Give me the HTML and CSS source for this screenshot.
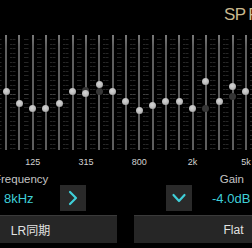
FILE: index.html
```html
<!DOCTYPE html>
<html>
<head>
<meta charset="utf-8">
<link rel="stylesheet" href="styles.css">
</head>
<body>
<div class="screen">
  <header class="top">
    <span class="title">SP F</span>
  </header>
  <div class="eq">
    <div class="band"><span class="knob" style="top:52.8px"></span></div>
    <div class="band"><span class="knob" style="top:64.8px"></span></div>
    <div class="band"><span class="knob" style="top:69.8px"></span></div>
    <div class="band"><span class="knob" style="top:69.8px"></span></div>
    <div class="band"><span class="knob" style="top:64.8px"></span></div>
    <div class="band"><span class="knob" style="top:52.8px"></span></div>
    <div class="band"><span class="knob ghost" style="top:51.5px"></span><span class="knob" style="top:55.2px"></span></div>
    <div class="band"><span class="knob ghost" style="top:52.8px"></span><span class="knob" style="top:45.5px"></span></div>
    <div class="band"><span class="knob" style="top:52.8px"></span></div>
    <div class="band"><span class="knob" style="top:62.5px"></span></div>
    <div class="band"><span class="knob" style="top:72.2px"></span></div>
    <div class="band"><span class="knob" style="top:67.2px"></span></div>
    <div class="band"><span class="knob" style="top:62.5px"></span></div>
    <div class="band"><span class="knob" style="top:62.5px"></span></div>
    <div class="band"><span class="knob" style="top:69.8px"></span></div>
    <div class="band"><span class="knob ghost" style="top:69.8px"></span><span class="knob" style="top:42.8px"></span></div>
    <div class="band"><span class="knob" style="top:62.5px"></span></div>
    <div class="band"><span class="knob ghost" style="top:57.5px"></span><span class="knob" style="top:47.8px"></span></div>
    <div class="band"><span class="knob" style="top:52.5px"></span></div>
  </div>
  <div class="freqs">
    <span class="f f1">125</span>
    <span class="f f2">315</span>
    <span class="f f3">800</span>
    <span class="f f4">2k</span>
    <span class="f f5">5k</span>
  </div>
  <div class="captions">
    <span class="cap-left">Frequency</span>
    <span class="cap-right">Gain</span>
  </div>
  <div class="values">
    <span class="val freq-val">8kHz</span>
    <button class="step next">
      <svg width="26" height="26" viewBox="0 0 26 26"><path d="M10 7 L16 13 L10 19" fill="none" stroke="#3fcfd8" stroke-width="2.2" stroke-linecap="round" stroke-linejoin="round"/></svg>
    </button>
    <button class="step down">
      <svg width="26" height="26" viewBox="0 0 26 26"><path d="M7.5 10 L13 16 L18.5 10" fill="none" stroke="#3fcfd8" stroke-width="2.2" stroke-linecap="round" stroke-linejoin="round"/></svg>
    </button>
    <span class="val gain-val">-4.0dB</span>
  </div>
  <div class="actions">
    <button class="act lr">LR同期</button>
    <button class="act flat">Flat</button>
  </div>
</div>
</body>
</html>
```
FILE: styles.css
```css
html, body {
  margin: 0;
  padding: 0;
  background: #000;
}
body {
  width: 252px;
  height: 248px;
  overflow: hidden;
  font-family: "Liberation Sans", "Noto Sans CJK JP", sans-serif;
}
.screen {
  width: 252px;
  height: 248px;
  overflow: hidden;
  display: flex;
  flex-direction: column;
}
.top {
  height: 35px;
  flex: none;
  box-sizing: border-box;
  padding: 6px 0 0 224px;
  white-space: nowrap;
  overflow: hidden;
}
.title {
  color: #c9b88e;
  font-size: 17px;
  line-height: 17px;
  letter-spacing: -0.6px;
  word-spacing: -1px;
  display: block;
}
.eq {
  display: grid;
  grid-template-columns: repeat(19, 13.333px);
  margin-left: -0.667px;
  height: 115px;
  flex: none;
}
.band {
  position: relative;
  height: 115px;
  background:
    linear-gradient(#404040, #404040) left 0 top 59px / 2.5px 1px no-repeat,
    linear-gradient(#404040, #404040) right 0 top 59px / 2.5px 1px no-repeat,
    repeating-linear-gradient(to bottom, #262626 0, #262626 1px, transparent 1px, transparent 4.55px) left 0 top 4.4px / 2.5px 110px no-repeat,
    repeating-linear-gradient(to bottom, #262626 0, #262626 1px, transparent 1px, transparent 4.55px) right 0 top 4.4px / 2.5px 110px no-repeat;
  display: flex;
  justify-content: center;
}
.band::before {
  content: "";
  width: 2px;
  height: 115px;
  background: linear-gradient(to bottom, #7a7a7a, #5e5e5e 10%, #5e5e5e);
}
.knob {
  position: absolute;
  left: 50%;
  width: 7px;
  height: 7px;
  margin-left: -3.5px;
  border-radius: 50%;
  background: radial-gradient(circle at 45% 40%, #d6d6d6 0, #bcbcbc 50%, #8c8c8c 100%);
}
.knob.ghost {
  background: #363636;
}
.freqs {
  display: grid;
  grid-template-columns: repeat(21, 13.333px);
  margin-left: -0.667px;
  height: 22px;
  flex: none;
  align-items: center;
  padding-top: 2px;
  box-sizing: border-box;
}
.f {
  font-size: 9px;
  color: #d2d2d2;
  text-align: center;
  grid-column-end: span 3;
}
.f1 { grid-column-start: 2; }
.f2 { grid-column-start: 6; }
.f3 { grid-column-start: 10; }
.f4 { grid-column-start: 14; }
.f5 { grid-column-start: 18; }
.captions {
  display: flex;
  justify-content: space-between;
  height: 14px;
  flex: none;
  box-sizing: border-box;
  padding-top: 1px;
  font-size: 11.5px;
  color: #c4c4c4;
  line-height: 13px;
}
.cap-left { margin-left: -6px; }
.cap-right { margin-right: 8px; }
.values {
  display: flex;
  align-items: center;
  margin-top: -1px;
  height: 26px;
  flex: none;
}
.val {
  font-size: 13px;
  color: #3fcfd8;
  white-space: nowrap;
}
.freq-val {
  width: 56px;
  padding-left: 4px;
}
.step {
  width: 26px;
  height: 26px;
  padding: 0;
  border: 0;
  background: #2a2a2a;
  display: flex;
  flex: none;
}
.down { margin-left: 80px; }
.gain-val { margin-left: 20px; }
.actions {
  display: flex;
  gap: 17px;
  margin-top: 4px;
  flex: none;
}
.act {
  flex: none;
  height: 28px;
  border: 0;
  border-top: 1px solid #3a3a3a;
  background: #262626;
  color: #e2e2e2;
  font-family: "Liberation Sans", "Noto Sans CJK JP", sans-serif;
  font-size: 12px;
  padding: 0;
  text-align: center;
}
.lr {
  width: 173px;
  margin-left: -56px;
}
.flat {
  width: 199px;
}
```
